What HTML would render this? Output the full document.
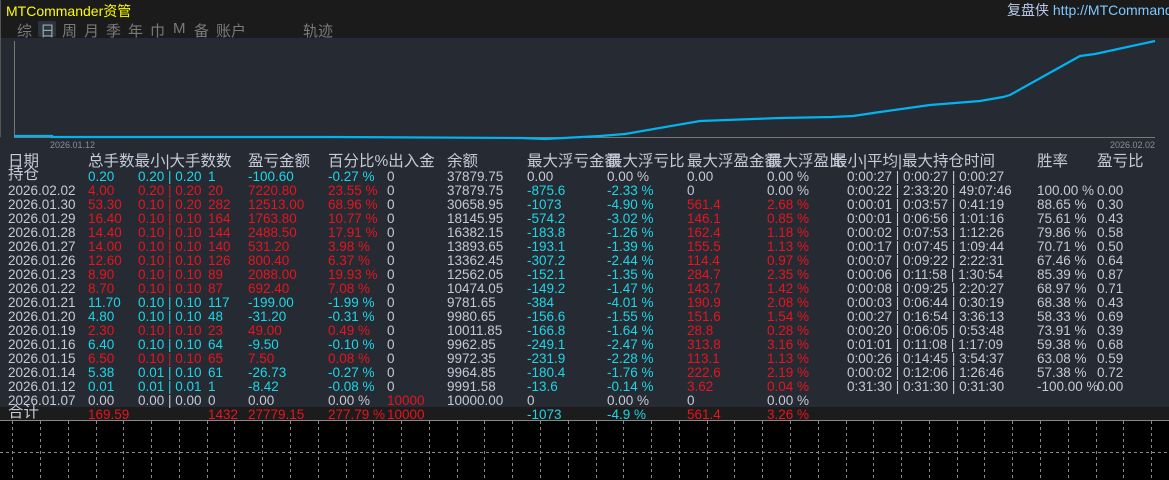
<!DOCTYPE html>
<html><head><meta charset="utf-8"><style>
*{margin:0;padding:0;box-sizing:border-box}
body{width:1169px;height:480px;background:#000;position:relative;overflow:hidden;font-family:"Liberation Sans","Noto Sans CJK SC",sans-serif;}
#top{position:absolute;left:0;top:0;width:1169px;height:38px;background:#1b1b1b}
#main{position:absolute;left:0;top:38px;width:1169px;height:382px;background:#252a33}
.t{position:absolute;white-space:nowrap}
.r{position:absolute;left:0;width:1169px;height:14px;font-size:13.5px;line-height:14px;color:#c4cad6}
.r span{position:absolute;white-space:nowrap}
.c{color:#1ed6e6}.d{color:#e8141e}
.h{font-size:15.5px;color:#c4cad6}
.tab{position:absolute;top:20px;font-size:15px;color:#7a7a7a}
</style></head><body>
<div id="top"></div>
<div class="t" style="left:6px;top:1px;font-size:14px;color:#ffff00">MTCommander资管</div>
<div class="t" style="left:1007px;top:0px;font-size:14px;color:#b8c8e8">复盘侠 <span style="color:#7ec8ff">http://MTCommander</span></div>
<div class="tab" style="left:17px">综</div>
<div style="position:absolute;left:38px;top:21px;width:18px;height:16px;background:#2c3440;border-radius:2px"></div>
<div class="tab" style="left:40px;color:#9aa">日</div>
<div class="tab" style="left:62px">周</div>
<div class="tab" style="left:84px">月</div>
<div class="tab" style="left:106px">季</div>
<div class="tab" style="left:128px">年</div>
<div class="tab" style="left:150px">巾</div>
<div class="tab" style="left:173px">M</div>
<div class="tab" style="left:194px">备</div>
<div class="tab" style="left:216px">账户</div>
<div class="tab" style="left:303px">轨迹</div>
<div id="main"></div>
<svg style="position:absolute;left:0;top:0" width="1169" height="480">
<line x1="14.5" y1="41" x2="14.5" y2="137" stroke="#777" stroke-width="1"/>
<line x1="14" y1="137.5" x2="1155" y2="137.5" stroke="#777" stroke-width="1"/>
<polyline fill="none" stroke="#00b4f0" stroke-width="2.2" points="14,136 52,136 52,137 330,137 520,138 545,139 600,136 625,134 700,121 780,118 832,117 853,116 880,112 930,105 980,101 1003,97 1010,95 1080,56 1095,54 1155,41"/>
<line x1="0.5" y1="0" x2="0.5" y2="137" stroke="#555"/>
<line x1="0" y1="420.5" x2="1169" y2="420.5" stroke="#888"/>
<line x1="0" y1="452.5" x2="1169" y2="452.5" stroke="#888" stroke-dasharray="3,3"/>
<g stroke="#888" stroke-dasharray="3,3">
<line x1="12.5" y1="421" x2="12.5" y2="480"/><line x1="40.5" y1="421" x2="40.5" y2="480"/><line x1="68.5" y1="421" x2="68.5" y2="480"/><line x1="96.5" y1="421" x2="96.5" y2="480"/><line x1="123.5" y1="421" x2="123.5" y2="480"/><line x1="151.5" y1="421" x2="151.5" y2="480"/><line x1="179.5" y1="421" x2="179.5" y2="480"/><line x1="207.5" y1="421" x2="207.5" y2="480"/><line x1="234.5" y1="421" x2="234.5" y2="480"/><line x1="262.5" y1="421" x2="262.5" y2="480"/><line x1="290.5" y1="421" x2="290.5" y2="480"/><line x1="318.5" y1="421" x2="318.5" y2="480"/><line x1="346.5" y1="421" x2="346.5" y2="480"/><line x1="373.5" y1="421" x2="373.5" y2="480"/><line x1="401.5" y1="421" x2="401.5" y2="480"/><line x1="429.5" y1="421" x2="429.5" y2="480"/><line x1="457.5" y1="421" x2="457.5" y2="480"/><line x1="484.5" y1="421" x2="484.5" y2="480"/><line x1="512.5" y1="421" x2="512.5" y2="480"/><line x1="540.5" y1="421" x2="540.5" y2="480"/><line x1="568.5" y1="421" x2="568.5" y2="480"/><line x1="596.5" y1="421" x2="596.5" y2="480"/><line x1="623.5" y1="421" x2="623.5" y2="480"/><line x1="651.5" y1="421" x2="651.5" y2="480"/><line x1="679.5" y1="421" x2="679.5" y2="480"/><line x1="707.5" y1="421" x2="707.5" y2="480"/><line x1="734.5" y1="421" x2="734.5" y2="480"/><line x1="762.5" y1="421" x2="762.5" y2="480"/><line x1="790.5" y1="421" x2="790.5" y2="480"/><line x1="818.5" y1="421" x2="818.5" y2="480"/><line x1="846.5" y1="421" x2="846.5" y2="480"/><line x1="873.5" y1="421" x2="873.5" y2="480"/><line x1="901.5" y1="421" x2="901.5" y2="480"/><line x1="929.5" y1="421" x2="929.5" y2="480"/><line x1="957.5" y1="421" x2="957.5" y2="480"/><line x1="984.5" y1="421" x2="984.5" y2="480"/><line x1="1012.5" y1="421" x2="1012.5" y2="480"/><line x1="1040.5" y1="421" x2="1040.5" y2="480"/><line x1="1068.5" y1="421" x2="1068.5" y2="480"/><line x1="1096.5" y1="421" x2="1096.5" y2="480"/><line x1="1123.5" y1="421" x2="1123.5" y2="480"/><line x1="1151.5" y1="421" x2="1151.5" y2="480"/>
</g>
<text x="50" y="148" font-family="Liberation Sans" font-size="9" fill="#8a909a">2026.01.12</text>
<text x="1110" y="148" font-family="Liberation Sans" font-size="9" fill="#8a909a">2026.02.02</text>
</svg>
<div style="position:absolute;left:0;top:407px;width:1169px;height:13px;background:#1c1c1c"></div>

<div class="r h" style="top:153px;height:18px;line-height:18px"><span style="left:8px">日期</span><span style="left:88px">总手数最小|大手数数</span><span style="left:248px">盈亏金额</span><span style="left:328px">百分比%出入金</span><span style="left:447px">余额</span><span style="left:527px">最大浮亏金额</span><span style="left:607px">最大浮亏比</span><span style="left:687px">最大浮盈金额</span><span style="left:767px">最大浮盈比</span><span style="left:832px">最小|平均|最大持仓时间</span><span style="left:1037px">胜率</span><span style="left:1097px">盈亏比</span></div>

<div class="r" style="top:170px"><span class="h" style="left:8px;top:-2px">持仓</span><span class="c" style="left:88px">0.20</span><span class="c" style="left:138px">0.20 | 0.20</span><span class="c" style="left:208px">1</span><span class="c" style="left:248px">-100.60</span><span class="c" style="left:328px">-0.27 %</span><span style="left:387px">0</span><span style="left:447px">37879.75</span><span style="left:527px">0.00</span><span style="left:607px">0.00 %</span><span style="left:687px">0.00</span><span style="left:767px">0.00 %</span><span style="left:847px">0:00:27 | 0:00:27 | 0:00:27</span></div>

<div class="r" style="top:184px"><span style="left:8px">2026.02.02</span><span class="d" style="left:88px">4.00</span><span class="d" style="left:138px">0.20 | 0.20</span><span class="d" style="left:208px">20</span><span class="d" style="left:248px">7220.80</span><span class="d" style="left:328px">23.55 %</span><span style="left:387px">0</span><span style="left:447px">37879.75</span><span class="c" style="left:527px">-875.6</span><span class="c" style="left:607px">-2.33 %</span><span style="left:687px">0</span><span style="left:767px">0.00 %</span><span style="left:847px">0:00:22 | 2:33:20 | 49:07:46</span><span style="left:1037px">100.00 %</span><span style="left:1097px">0.00</span></div>

<div class="r" style="top:198px"><span style="left:8px">2026.01.30</span><span class="d" style="left:88px">53.30</span><span class="d" style="left:138px">0.10 | 0.20</span><span class="d" style="left:208px">282</span><span class="d" style="left:248px">12513.00</span><span class="d" style="left:328px">68.96 %</span><span style="left:387px">0</span><span style="left:447px">30658.95</span><span class="c" style="left:527px">-1073</span><span class="c" style="left:607px">-4.90 %</span><span class="d" style="left:687px">561.4</span><span class="d" style="left:767px">2.68 %</span><span style="left:847px">0:00:01 | 0:03:57 | 0:41:19</span><span style="left:1037px">88.65 %</span><span style="left:1097px">0.30</span></div>

<div class="r" style="top:212px"><span style="left:8px">2026.01.29</span><span class="d" style="left:88px">16.40</span><span class="d" style="left:138px">0.10 | 0.10</span><span class="d" style="left:208px">164</span><span class="d" style="left:248px">1763.80</span><span class="d" style="left:328px">10.77 %</span><span style="left:387px">0</span><span style="left:447px">18145.95</span><span class="c" style="left:527px">-574.2</span><span class="c" style="left:607px">-3.02 %</span><span class="d" style="left:687px">146.1</span><span class="d" style="left:767px">0.85 %</span><span style="left:847px">0:00:01 | 0:06:56 | 1:01:16</span><span style="left:1037px">75.61 %</span><span style="left:1097px">0.43</span></div>

<div class="r" style="top:226px"><span style="left:8px">2026.01.28</span><span class="d" style="left:88px">14.40</span><span class="d" style="left:138px">0.10 | 0.10</span><span class="d" style="left:208px">144</span><span class="d" style="left:248px">2488.50</span><span class="d" style="left:328px">17.91 %</span><span style="left:387px">0</span><span style="left:447px">16382.15</span><span class="c" style="left:527px">-183.8</span><span class="c" style="left:607px">-1.26 %</span><span class="d" style="left:687px">162.4</span><span class="d" style="left:767px">1.18 %</span><span style="left:847px">0:00:02 | 0:07:53 | 1:12:26</span><span style="left:1037px">79.86 %</span><span style="left:1097px">0.58</span></div>

<div class="r" style="top:240px"><span style="left:8px">2026.01.27</span><span class="d" style="left:88px">14.00</span><span class="d" style="left:138px">0.10 | 0.10</span><span class="d" style="left:208px">140</span><span class="d" style="left:248px">531.20</span><span class="d" style="left:328px">3.98 %</span><span style="left:387px">0</span><span style="left:447px">13893.65</span><span class="c" style="left:527px">-193.1</span><span class="c" style="left:607px">-1.39 %</span><span class="d" style="left:687px">155.5</span><span class="d" style="left:767px">1.13 %</span><span style="left:847px">0:00:17 | 0:07:45 | 1:09:44</span><span style="left:1037px">70.71 %</span><span style="left:1097px">0.50</span></div>

<div class="r" style="top:254px"><span style="left:8px">2026.01.26</span><span class="d" style="left:88px">12.60</span><span class="d" style="left:138px">0.10 | 0.10</span><span class="d" style="left:208px">126</span><span class="d" style="left:248px">800.40</span><span class="d" style="left:328px">6.37 %</span><span style="left:387px">0</span><span style="left:447px">13362.45</span><span class="c" style="left:527px">-307.2</span><span class="c" style="left:607px">-2.44 %</span><span class="d" style="left:687px">114.4</span><span class="d" style="left:767px">0.97 %</span><span style="left:847px">0:00:07 | 0:09:22 | 2:22:31</span><span style="left:1037px">67.46 %</span><span style="left:1097px">0.64</span></div>

<div class="r" style="top:268px"><span style="left:8px">2026.01.23</span><span class="d" style="left:88px">8.90</span><span class="d" style="left:138px">0.10 | 0.10</span><span class="d" style="left:208px">89</span><span class="d" style="left:248px">2088.00</span><span class="d" style="left:328px">19.93 %</span><span style="left:387px">0</span><span style="left:447px">12562.05</span><span class="c" style="left:527px">-152.1</span><span class="c" style="left:607px">-1.35 %</span><span class="d" style="left:687px">284.7</span><span class="d" style="left:767px">2.35 %</span><span style="left:847px">0:00:06 | 0:11:58 | 1:30:54</span><span style="left:1037px">85.39 %</span><span style="left:1097px">0.87</span></div>

<div class="r" style="top:282px"><span style="left:8px">2026.01.22</span><span class="d" style="left:88px">8.70</span><span class="d" style="left:138px">0.10 | 0.10</span><span class="d" style="left:208px">87</span><span class="d" style="left:248px">692.40</span><span class="d" style="left:328px">7.08 %</span><span style="left:387px">0</span><span style="left:447px">10474.05</span><span class="c" style="left:527px">-149.2</span><span class="c" style="left:607px">-1.47 %</span><span class="d" style="left:687px">143.7</span><span class="d" style="left:767px">1.42 %</span><span style="left:847px">0:00:08 | 0:09:25 | 2:20:27</span><span style="left:1037px">68.97 %</span><span style="left:1097px">0.71</span></div>

<div class="r" style="top:296px"><span style="left:8px">2026.01.21</span><span class="c" style="left:88px">11.70</span><span class="c" style="left:138px">0.10 | 0.10</span><span class="c" style="left:208px">117</span><span class="c" style="left:248px">-199.00</span><span class="c" style="left:328px">-1.99 %</span><span style="left:387px">0</span><span style="left:447px">9781.65</span><span class="c" style="left:527px">-384</span><span class="c" style="left:607px">-4.01 %</span><span class="d" style="left:687px">190.9</span><span class="d" style="left:767px">2.08 %</span><span style="left:847px">0:00:03 | 0:06:44 | 0:30:19</span><span style="left:1037px">68.38 %</span><span style="left:1097px">0.43</span></div>

<div class="r" style="top:310px"><span style="left:8px">2026.01.20</span><span class="c" style="left:88px">4.80</span><span class="c" style="left:138px">0.10 | 0.10</span><span class="c" style="left:208px">48</span><span class="c" style="left:248px">-31.20</span><span class="c" style="left:328px">-0.31 %</span><span style="left:387px">0</span><span style="left:447px">9980.65</span><span class="c" style="left:527px">-156.6</span><span class="c" style="left:607px">-1.55 %</span><span class="d" style="left:687px">151.6</span><span class="d" style="left:767px">1.54 %</span><span style="left:847px">0:00:27 | 0:16:54 | 3:36:13</span><span style="left:1037px">58.33 %</span><span style="left:1097px">0.69</span></div>

<div class="r" style="top:324px"><span style="left:8px">2026.01.19</span><span class="d" style="left:88px">2.30</span><span class="d" style="left:138px">0.10 | 0.10</span><span class="d" style="left:208px">23</span><span class="d" style="left:248px">49.00</span><span class="d" style="left:328px">0.49 %</span><span style="left:387px">0</span><span style="left:447px">10011.85</span><span class="c" style="left:527px">-166.8</span><span class="c" style="left:607px">-1.64 %</span><span class="d" style="left:687px">28.8</span><span class="d" style="left:767px">0.28 %</span><span style="left:847px">0:00:20 | 0:06:05 | 0:53:48</span><span style="left:1037px">73.91 %</span><span style="left:1097px">0.39</span></div>

<div class="r" style="top:338px"><span style="left:8px">2026.01.16</span><span class="c" style="left:88px">6.40</span><span class="c" style="left:138px">0.10 | 0.10</span><span class="c" style="left:208px">64</span><span class="c" style="left:248px">-9.50</span><span class="c" style="left:328px">-0.10 %</span><span style="left:387px">0</span><span style="left:447px">9962.85</span><span class="c" style="left:527px">-249.1</span><span class="c" style="left:607px">-2.47 %</span><span class="d" style="left:687px">313.8</span><span class="d" style="left:767px">3.16 %</span><span style="left:847px">0:01:01 | 0:11:08 | 1:17:09</span><span style="left:1037px">59.38 %</span><span style="left:1097px">0.68</span></div>

<div class="r" style="top:352px"><span style="left:8px">2026.01.15</span><span class="d" style="left:88px">6.50</span><span class="d" style="left:138px">0.10 | 0.10</span><span class="d" style="left:208px">65</span><span class="d" style="left:248px">7.50</span><span class="d" style="left:328px">0.08 %</span><span style="left:387px">0</span><span style="left:447px">9972.35</span><span class="c" style="left:527px">-231.9</span><span class="c" style="left:607px">-2.28 %</span><span class="d" style="left:687px">113.1</span><span class="d" style="left:767px">1.13 %</span><span style="left:847px">0:00:26 | 0:14:45 | 3:54:37</span><span style="left:1037px">63.08 %</span><span style="left:1097px">0.59</span></div>

<div class="r" style="top:366px"><span style="left:8px">2026.01.14</span><span class="c" style="left:88px">5.38</span><span class="c" style="left:138px">0.01 | 0.10</span><span class="c" style="left:208px">61</span><span class="c" style="left:248px">-26.73</span><span class="c" style="left:328px">-0.27 %</span><span style="left:387px">0</span><span style="left:447px">9964.85</span><span class="c" style="left:527px">-180.4</span><span class="c" style="left:607px">-1.76 %</span><span class="d" style="left:687px">222.6</span><span class="d" style="left:767px">2.19 %</span><span style="left:847px">0:00:02 | 0:12:06 | 1:26:46</span><span style="left:1037px">57.38 %</span><span style="left:1097px">0.72</span></div>

<div class="r" style="top:380px"><span style="left:8px">2026.01.12</span><span class="c" style="left:88px">0.01</span><span class="c" style="left:138px">0.01 | 0.01</span><span class="c" style="left:208px">1</span><span class="c" style="left:248px">-8.42</span><span class="c" style="left:328px">-0.08 %</span><span style="left:387px">0</span><span style="left:447px">9991.58</span><span class="c" style="left:527px">-13.6</span><span class="c" style="left:607px">-0.14 %</span><span class="d" style="left:687px">3.62</span><span class="d" style="left:767px">0.04 %</span><span style="left:847px">0:31:30 | 0:31:30 | 0:31:30</span><span style="left:1037px">-100.00 %</span><span style="left:1097px">0.00</span></div>

<div class="r" style="top:394px"><span style="left:8px">2026.01.07</span><span style="left:88px">0.00</span><span style="left:138px">0.00 | 0.00</span><span style="left:208px">0</span><span style="left:248px">0.00</span><span style="left:328px">0.00 %</span><span class="d" style="left:387px">10000</span><span style="left:447px">10000.00</span><span style="left:527px">0</span><span style="left:607px">0.00 %</span><span style="left:687px">0</span><span style="left:767px">0.00 %</span></div>

<div class="r" style="top:408px"><span class="h" style="left:8px;top:-2px">合计</span><span class="d" style="left:88px">169.59</span><span class="d" style="left:208px">1432</span><span class="d" style="left:248px">27779.15</span><span class="d" style="left:328px">277.79 %</span><span class="d" style="left:387px">10000</span><span class="c" style="left:527px">-1073</span><span class="c" style="left:607px">-4.9 %</span><span class="d" style="left:687px">561.4</span><span class="d" style="left:767px">3.26 %</span></div>
</body></html>
